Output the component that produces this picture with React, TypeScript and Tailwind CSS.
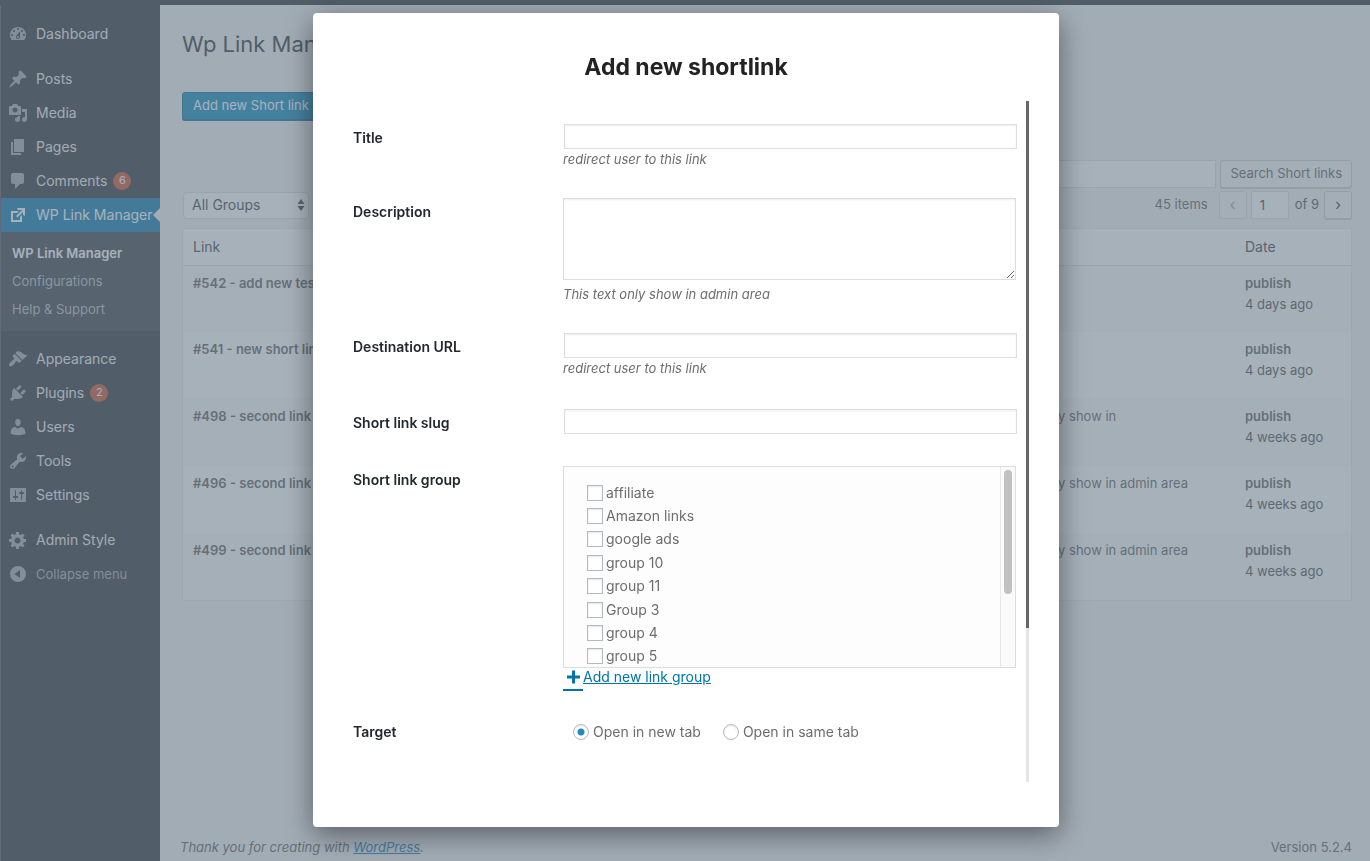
import React, { useState } from 'react';
import { clsx } from 'clsx';

// 20x20 glyphs for the admin menu
const GLYPHS = {
  dashboard: 'M3.76 16h12.48c1.1-1.37 1.76-3.11 1.76-5 0-4.42-3.58-8-8-8s-8 3.58-8 8c0 1.89.66 3.63 1.76 5zM10 4c.55 0 1 .45 1 1s-.45 1-1 1-1-.45-1-1 .45-1 1-1zM6 6c.55 0 1 .45 1 1s-.45 1-1 1-1-.45-1-1 .45-1 1-1zm8 0c.55 0 1 .45 1 1s-.45 1-1 1-1-.45-1-1 .45-1 1-1zm-5.37 5.55L12 7v6c0 1.1-.9 2-2 2s-2-.9-2-2c0-.57.24-1.08.63-1.45zM4 10c.55 0 1 .45 1 1s-.45 1-1 1-1-.45-1-1 .45-1 1-1zm12 0c.55 0 1 .45 1 1s-.45 1-1 1-1-.45-1-1 .45-1 1-1zm-5 3c0-.55-.45-1-1-1s-1 .45-1 1 .45 1 1 1 1-.45 1-1z',
  pin: 'M10.44 3.02l1.82-1.82 6.36 6.35-1.83 1.82c-1.05-.68-2.48-.57-3.41.36l-.75.75c-.92.93-1.04 2.35-.35 3.41l-1.83 1.82-2.41-2.41-2.8 2.79c-.42.42-3.38 2.71-3.8 2.29s1.86-3.39 2.28-3.81l2.79-2.79L4.1 9.36l1.83-1.82c1.05.69 2.48.57 3.4-.36l.75-.75c.93-.92 1.05-2.35.36-3.41z',
  media: 'M13 11V4c0-.55-.45-1-1-1h-1.67L9 1H5L3.67 3H2c-.55 0-1 .45-1 1v7c0 .55.45 1 1 1h10c.55 0 1-.45 1-1zM7 4.5c1.38 0 2.5 1.12 2.5 2.5S8.38 9.5 7 9.5 4.5 8.38 4.5 7 5.62 4.5 7 4.5zM14 6h5v10.5c0 1.38-1.12 2.5-2.5 2.5S14 17.88 14 16.5s1.12-2.5 2.5-2.5c.17 0 .34.02.5.05V9h-3V6zm-4 8.05V13h2v3.5c0 1.38-1.12 2.5-2.5 2.5S7 17.88 7 16.5 8.12 14 9.5 14c.17 0 .34.02.5.05z',
  page: 'M6 15V2h10v13H6zm-1 1h8v2H3V5h2v11z',
  comment: 'M5 2h9c1.1 0 2 .9 2 2v7c0 1.1-.9 2-2 2h-2l-5 5v-5H5c-1.1 0-2-.9-2-2V4c0-1.1.9-2 2-2z',
  external: 'M9 3h8v8l-2-1V6.92l-5.6 5.59-1.41-1.41L14.08 5H10zm3 12v-3l2-2v7H3V6h8L9 8H5v7h7z',
  brush: 'M14.48 11.06L7.41 3.99l1.5-1.5c.5-.56 2.3-.47 3.51.32 1.21.8 1.43 1.28 2.91 2.1 1.18.64 2.45 1.26 4.45.85zm-.71.71L6.7 4.7 4.93 6.47c-.39.39-.39 1.02 0 1.41l1.06 1.06c.39.39.39 1.03 0 1.42-.6.6-1.43 1.11-2.21 1.69-.35.26-.7.53-1.01.84C1.43 14.23.4 16.08 1.4 17.07c.99 1 2.84-.03 4.18-1.36.31-.31.58-.66.85-1.02.57-.78 1.08-1.61 1.69-2.21.39-.39 1.02-.39 1.41 0l1.06 1.06c.39.39 1.02.39 1.41 0z',
  plugin: 'M13.11 4.36L9.87 7.6 8 5.73l3.24-3.24c.35-.34 1.05-.2 1.56.32.52.51.66 1.21.31 1.55zm-8 1.77l.91-1.12 9.01 9.01-1.19.84c-.71.71-2.63 1.16-3.82 1.16H6.14L4.9 17.26c-.59.59-1.54.59-2.12 0-.59-.58-.59-1.53 0-2.12l1.24-1.24v-3.88c0-1.13.4-3.19 1.09-3.89zm7.26 3.97l3.24-3.24c.34-.35 1.04-.21 1.55.31.52.51.66 1.21.31 1.55l-3.24 3.25z',
  user: 'M10 9.25c-2.27 0-2.73-3.44-2.73-3.44C7 4.02 7.82 2 9.97 2c2.16 0 2.98 2.02 2.71 3.81 0 0-.41 3.44-2.68 3.44zm0 2.57L12.72 10c2.39 0 4.52 2.33 4.52 4.53v2.49s-3.65 1.13-7.24 1.13c-3.65 0-7.24-1.13-7.24-1.13v-2.49c0-2.25 1.94-4.48 4.47-4.48z',
  wrench: 'M16.68 9.77c-1.34 1.34-3.3 1.67-4.95.99l-5.41 6.52c-.99.99-2.59.99-3.58 0s-.99-2.59 0-3.57l6.52-5.42c-.68-1.65-.35-3.61.99-4.95 1.28-1.28 3.12-1.62 4.72-1.06l-2.89 2.89 2.82 2.82 2.86-2.87c.53 1.58.18 3.39-1.08 4.65zM3.81 16.21c.4.39 1.04.39 1.43 0 .4-.4.4-1.04 0-1.43-.39-.4-1.03-.4-1.43 0-.39.39-.39 1.03 0 1.43z',
  sliders: 'M18 16V4c0-.55-.45-1-1-1H3c-.55 0-1 .45-1 1v12c0 .55.45 1 1 1h14c.55 0 1-.45 1-1zM8 11h1c.55 0 1 .45 1 1s-.45 1-1 1H8v1.5c0 .28-.22.5-.5.5s-.5-.22-.5-.5V13H6c-.55 0-1-.45-1-1s.45-1 1-1h1V5.5c0-.28.22-.5.5-.5s.5.22.5.5V11zm5-2h-1c-.55 0-1-.45-1-1s.45-1 1-1h1V5.5c0-.28.22-.5.5-.5s.5.22.5.5V7h1c.55 0 1 .45 1 1s-.45 1-1 1h-1v5.5c0 .28-.22.5-.5.5s-.5-.22-.5-.5V9z',
  gear: 'M18 12h-2.18c-.17.7-.44 1.35-.81 1.93l1.54 1.54-2.1 2.1-1.54-1.54c-.58.36-1.23.63-1.91.79V19H8v-2.18c-.68-.16-1.33-.43-1.91-.79l-1.54 1.54-2.12-2.12 1.54-1.54c-.36-.58-.63-1.23-.79-1.91H1V9.03h2.17c.16-.7.44-1.35.8-1.94L2.43 5.55l2.1-2.1 1.54 1.54c.58-.37 1.24-.64 1.93-.81V2h3v2.18c.68.16 1.33.43 1.91.79l1.54-1.54 2.12 2.12-1.54 1.54c.36.59.64 1.24.8 1.94H18V12zm-8.5 1.5c1.66 0 3-1.34 3-3s-1.34-3-3-3-3 1.34-3 3 1.34 3 3 3z',
  collapse: 'M10 2a8 8 0 1 0 0 16 8 8 0 0 0 0-16zM12 14L6.5 10 12 6z',
};

type GlyphName = keyof typeof GLYPHS;

const MENU: { label: string; icon: GlyphName; badge?: number; active?: boolean; gap?: boolean; sub?: string[] }[] = [
  { label: 'Dashboard', icon: 'dashboard' },
  { label: 'Posts', icon: 'pin', gap: true },
  { label: 'Media', icon: 'media' },
  { label: 'Pages', icon: 'page' },
  { label: 'Comments', icon: 'comment', badge: 6 },
  { label: 'WP Link Manager', icon: 'external', active: true, sub: ['WP Link Manager', 'Configurations', 'Help & Support'] },
  { label: 'Appearance', icon: 'brush', gap: true },
  { label: 'Plugins', icon: 'plugin', badge: 2 },
  { label: 'Users', icon: 'user' },
  { label: 'Tools', icon: 'wrench' },
  { label: 'Settings', icon: 'sliders' },
  { label: 'Admin Style', icon: 'gear', gap: true },
];

const LINKS = [
  { name: '#542 - add new test link', note: '', date: '4 days ago' },
  { name: '#541 - new short link', note: '', date: '4 days ago' },
  { name: '#498 - second link', note: 'This text only show in', date: '4 weeks ago' },
  { name: '#496 - second link', note: 'This text only show in admin area', date: '4 weeks ago' },
  { name: '#499 - second link', note: 'This text only show in admin area', date: '4 weeks ago' },
];

const GROUPS = ['affiliate', 'Amazon links', 'google ads', 'group 10', 'group 11', 'Group 3', 'group 4', 'group 5'];

const Glyph = ({ name }: { name: GlyphName }) => (
  <svg viewBox="0 0 20 20" className="size-5 shrink-0" fill="currentColor" fillRule="evenodd" aria-hidden="true">
    <path d={GLYPHS[name]} />
  </svg>
);

function Sidebar() {
  return (
    <nav className="w-40 shrink-0 border-l border-[#4a4f54] bg-[#23282d] pt-3 text-sm text-[#eeeeee]">
      <ul>
        {MENU.map(item => (
          <li key={item.label} className={clsx(item.gap && 'mt-[11px]')}>
            <a
              href="#"
              className={clsx('relative flex h-[34px] items-center gap-2 pl-[7px] whitespace-nowrap', item.active && 'bg-[#0073aa] text-white')}
            >
              <span className={clsx('flex', item.active ? 'text-white' : 'text-[#a0a5aa]')}>
                <Glyph name={item.icon} />
              </span>
              {item.label}
              {item.badge && (
                <span className="-ml-0.5 flex size-[18px] items-center justify-center rounded-full bg-[#ca4a1f] text-[11px] text-white">{item.badge}</span>
              )}
              {item.active && (
                <span className="absolute top-[10px] right-0 border-y-[7px] border-r-[7px] border-y-transparent border-r-[#f1f1f1]" />
              )}
            </a>
            {item.sub && (
              <ul className="bg-[#32373c] pt-[7px] pb-2 text-[13px] text-[#b4b9be]">
                {item.sub.map((sub, i) => (
                  <li key={sub}>
                    <a href="#" className={clsx('block pl-[11px] leading-7', i === 0 && 'font-semibold text-white')}>{sub}</a>
                  </li>
                ))}
              </ul>
            )}
          </li>
        ))}
      </ul>
      <button type="button" className="flex h-[34px] items-center gap-2 pl-[7px] text-[13px] text-[#a0a5aa]">
        <Glyph name="collapse" />
        Collapse menu
      </button>
    </nav>
  );
}

function LinksPage() {
  return (
    <main className="flex min-w-0 flex-1 flex-col pr-[18px] pl-[22px] text-[13px] text-[#444444]">
      <h1 className="mt-6 text-[22px] leading-[30px] text-[#23282d]">Wp Link Manager</h1>
      <div className="mt-[33px]">
        <button type="button" className="h-[28px] rounded-[3px] border border-[#006799] bg-[#0085ba] px-2.5 text-white shadow-[0_1px_0_#006799]">
          Add new Short link
        </button>
      </div>

      <div className="mt-10 flex justify-end gap-1">
        <input aria-label="Search" className="h-7 w-[280px] border border-[#dddddd] bg-white px-2" />
        <button type="button" className="h-7 rounded-[3px] border border-[#cccccc] bg-[#f7f7f7] px-[9px] text-[#555555] shadow-[0_1px_0_#cccccc]">
          Search Short links
        </button>
      </div>

      <div className="mt-[3px] flex items-center">
        <div className="relative ml-px">
          <select aria-label="Group" className="block h-[27px] w-[126px] appearance-none rounded-[4px] border border-[#dddddd] bg-white pl-2 text-sm text-[#32373c]">
            <option>All Groups</option>
          </select>
          <svg viewBox="0 0 8 14" className="absolute top-[6px] right-1 h-[14px] w-2" fill="#32373c" aria-hidden="true">
            <path d="M4 1l3.500 5h-7zM4 13L.5 8h7z" />
          </svg>
        </div>
        <div className="ml-auto flex items-center">
          <span className="mr-[11px] text-[#555555]">45 items</span>
          <button type="button" disabled aria-label="Previous page" className="mr-1 size-7 rounded-[3px] border border-[#dddddd] bg-[#f7f7f7] pb-0.5 text-base text-[#a0a5aa]">‹</button>
          <input aria-label="Current page" defaultValue="1" className="mr-1.5 h-7 w-[38px] border border-[#dddddd] bg-white px-2 text-[#32373c]" />
          <span className="mr-[5px]">of 9</span>
          <button type="button" aria-label="Next page" className="size-7 rounded-[3px] border border-[#cccccc] bg-[#f7f7f7] pb-0.5 text-base text-[#32373c] shadow-[0_1px_0_#cccccc]">›</button>
        </div>
      </div>

      <div className="mt-[9px] border border-[#e5e5e5] bg-white">
        <table className="w-full table-fixed text-left">
          <thead className="text-sm text-[#32373c]">
            <tr className="h-9 border-b border-[#e1e1e1]">
              <th className="px-2.5 font-normal">Link</th>
              <th className="w-[262px]" aria-label="Description" />
              <th className="w-[116px] px-2.5 font-normal">Date</th>
            </tr>
          </thead>
          <tbody>
            {LINKS.map(link => (
              <tr key={link.name} className="h-[67px] align-top leading-[21px] odd:bg-[#f9f9f9]">
                <td className="px-2.5 pt-[7px] font-semibold text-[#555555]">{link.name}</td>
                <td className="px-2.5 pt-[7px] text-[#555555]">{link.note}</td>
                <td className="px-2.5 pt-[7px]">
                  <strong className="block font-semibold text-[#555555]">publish</strong>
                  {link.date}
                </td>
              </tr>
            ))}
          </tbody>
        </table>
      </div>

      <footer className="mt-auto flex justify-between pb-1 leading-5 text-[#555555]">
        <p className="-ml-0.5 italic">
          Thank you for creating with <a href="#" className="text-[#0073aa] underline">WordPress</a>.
        </p>
        <p>Version 5.2.4</p>
      </footer>
    </main>
  );
}

const LABEL = 'pt-1 text-sm leading-5 font-semibold text-[#23282d]';
const INPUT = 'ml-px block h-[25px] w-[calc(100%-1px)] border border-[#dddddd] bg-white px-1.5 shadow-[inset_0_1px_2px_rgba(0,0,0,0.07)]';
const ROW = 'grid grid-cols-[210px_1fr]';
const RADIO = 'size-4 appearance-none rounded-full border border-[#b4b9be] bg-white shadow-[inset_0_1px_2px_rgba(0,0,0,0.1)] checked:bg-[radial-gradient(circle,#1e8cbe_3px,#ffffff_4px)]';

function ShortlinkDialog() {
  const [target, setTarget] = useState('new');

  return (
    <div className="fixed inset-0 flex justify-center bg-[#6f808f]/61 pt-[13px] pb-[34px] pl-0.5">
      <section
        role="dialog"
        aria-labelledby="dialog-title"
        className="flex w-[746px] flex-col rounded-[4px] bg-white pr-[30px] pb-[45px] pl-10 shadow-[0_8px_28px_rgba(0,0,0,0.45)]"
      >
        <h2 id="dialog-title" className="pt-[38px] pr-2.5 text-center text-[23px] leading-8 font-bold text-[#222222]">Add new shortlink</h2>

        <div className="mt-[18px] flex min-h-0 flex-1 gap-[9px]">
          <form className="min-w-0 flex-1 overflow-hidden pt-[23px] text-sm text-[#6d6d6d]">
            <div className={ROW}>
              <label htmlFor="title" className={LABEL}>Title</label>
              <div>
                <input id="title" className={INPUT} />
                <p className="mt-px text-[13px] leading-[18px] italic">redirect user to this link</p>
              </div>
            </div>

            <div className={clsx(ROW, 'mt-[30px]')}>
              <label htmlFor="description" className={LABEL}>Description</label>
              <div>
                <textarea
                  id="description"
                  className="block h-[82px] w-[calc(100%-1px)] border border-[#dddddd] bg-white p-1.5 shadow-[inset_0_1px_2px_rgba(0,0,0,0.07)]"
                />
                <p className="mt-[5px] text-[13px] leading-[18px] italic">This text only show in admin area</p>
              </div>
            </div>

            <div className={clsx(ROW, 'mt-[30px]')}>
              <label htmlFor="url" className={LABEL}>Destination URL</label>
              <div>
                <input id="url" className={INPUT} />
                <p className="mt-px text-[13px] leading-[18px] italic">redirect user to this link</p>
              </div>
            </div>

            <div className={clsx(ROW, 'mt-8')}>
              <label htmlFor="slug" className={LABEL}>Short link slug</label>
              <input id="slug" className={INPUT} />
            </div>

            <div className={clsx(ROW, 'mt-8')}>
              <span id="group-label" className={LABEL}>Short link group</span>
              <div>
                <div role="group" aria-labelledby="group-label" className="mr-px flex h-[202px] overflow-hidden border border-[#dddddd] bg-[#fdfdfd]">
                  <div className="mt-3.5 grid h-[187px] flex-1 grid-rows-8 pl-[23px]">
                    {GROUPS.map(group => (
                      <label key={group} className="flex items-center gap-[3px]">
                        <input type="checkbox" className="size-4 appearance-none border border-[#b4b9be] bg-white shadow-[inset_0_1px_2px_rgba(0,0,0,0.1)]" />
                        {group}
                      </label>
                    ))}
                  </div>
                  {/* list scrollbar */}
                  <div className="w-[15px] border-l border-[#e8e8e8] bg-[#fafafa] px-[3px] pt-[3px]">
                    <div className="h-[124px] w-2 rounded-full bg-[#c1c1c1]" />
                  </div>
                </div>
                <a href="#" className="flex h-5 text-[#0073aa]">
                  <span className="h-[23px] w-5 shrink-0 border-b-2 border-[#0073aa]">
                    <svg viewBox="0 0 20 20" className="size-5" fill="currentColor" aria-hidden="true">
                      <path d="M9 2.500h3v5h5v3h-5v5H9v-5H4v-3h5z" />
                    </svg>
                  </span>
                  <span className="leading-[18px] underline">Add new link group</span>
                </a>
              </div>
            </div>

            <div className={clsx(ROW, 'mt-[30px]')}>
              <span id="target-label" className={LABEL}>Target</span>
              <div role="radiogroup" aria-labelledby="target-label" className="flex gap-[22px] pt-1 pl-2.5 leading-5">
                <label className="flex items-center gap-1">
                  <input type="radio" name="target" checked={target === 'new'} onChange={() => setTarget('new')} className={RADIO} />
                  Open in new tab
                </label>
                <label className="flex items-center gap-1">
                  <input type="radio" name="target" checked={target === 'same'} onChange={() => setTarget('same')} className={RADIO} />
                  Open in same tab
                </label>
              </div>
            </div>
          </form>

          {/* dialog scrollbar */}
          <div className="w-[3px] bg-[#e5e5e5]">
            <div className="h-[527px] bg-[#666666]" />
          </div>
        </div>
      </section>
    </div>
  );
}

export default function App() {
  return (
    <div className="flex min-h-screen flex-col bg-[#f1f1f1] font-[Inter,sans-serif]">
      <div className="h-[5px] bg-[#23282d]" />
      <div className="flex flex-1">
        <Sidebar />
        <LinksPage />
      </div>
      <ShortlinkDialog />
    </div>
  );
}
